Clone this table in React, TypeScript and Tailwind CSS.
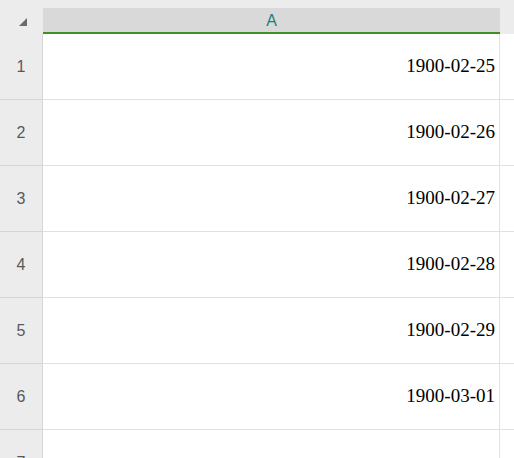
const rows = [
  { n: 1, v: "1900-02-25" },
  { n: 2, v: "1900-02-26" },
  { n: 3, v: "1900-02-27" },
  { n: 4, v: "1900-02-28" },
  { n: 5, v: "1900-02-29" },
  { n: 6, v: "1900-03-01" },
  { n: 7, v: "" },
];

export default function App() {
  return (
    <div className="w-[514px] h-[458px] overflow-hidden bg-white">
      {/* top strip */}
      <div className="h-2 bg-[#ececec]" />

      {/* column header */}
      <div className="flex h-[26px]">
        <div className="w-[43px] shrink-0 bg-[#ececec] flex items-center justify-center">
          <svg width="8" height="8" viewBox="0 0 8 8" className="mt-[2px] ml-[2px]">
            <path d="M8 0 L8 8 L0 8 Z" fill="#6b6b6b" />
          </svg>
        </div>
        <div className="w-[457px] shrink-0 bg-[#d9d9d9] border-b-2 border-[#3f8f22] flex items-center justify-center pt-[2px] font-['Liberation_Sans',sans-serif] text-[16px] text-[#198078]">
          A
        </div>
        <div className="flex-1 bg-[#ececec]" />
      </div>

      {/* rows */}
      {rows.map((r) => (
        <div key={r.n} className="flex h-[66px]">
          <div className="w-[43px] shrink-0 bg-[#ececec] border-r border-b border-[#d5d5d5] flex items-center justify-center font-['Liberation_Sans',sans-serif] text-[16px] text-[#595959]">
            {r.n}
          </div>
          <div className="w-[457px] shrink-0 border-r border-b border-[#e1e1e1] flex items-center justify-end pr-[4px] font-['Liberation_Serif',serif] text-[19px] text-black">
            {r.v}
          </div>
          <div className="flex-1 border-b border-[#e1e1e1]" />
        </div>
      ))}
    </div>
  );
}
